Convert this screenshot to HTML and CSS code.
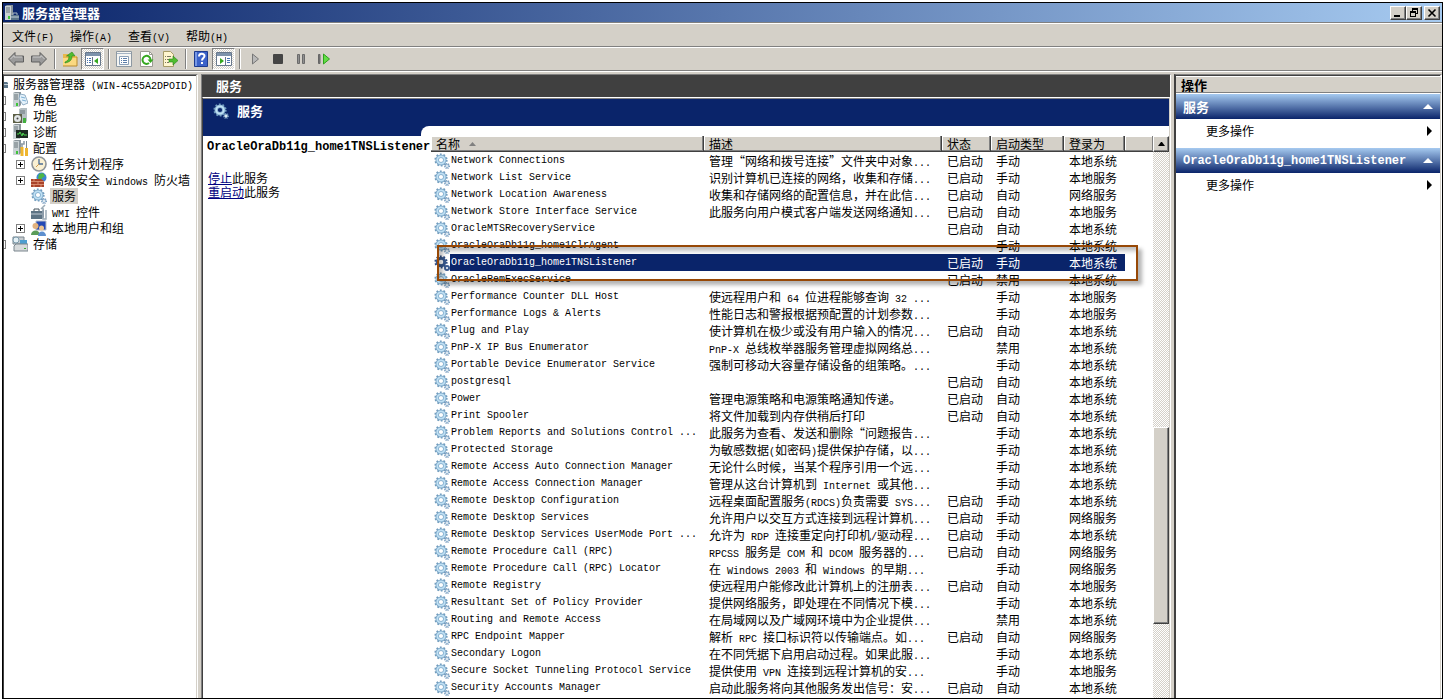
FILE: index.html
```
<!DOCTYPE html>
<html lang="zh-CN">
<head>
<meta charset="utf-8">
<title>服务器管理器</title>
<link rel="stylesheet" href="styles.css">
</head>
<body>
<svg class="defs" aria-hidden="true">
  <symbol id="gear" viewBox="0 0 16 16">
    <circle cx="7" cy="7" r="5.6" fill="none" stroke="#6f9abc" stroke-width="2" stroke-dasharray="1.7 1.82"/>
    <circle cx="7" cy="7" r="3.8" fill="none" stroke="#7fa9c9" stroke-width="3.400"/>
    <circle cx="7" cy="7" r="3.7" fill="none" stroke="#bfe0f4" stroke-width="1.8"/>
    <circle cx="13" cy="13" r="2.3" fill="none" stroke="#7297bb" stroke-width="1.4" stroke-dasharray="1 .8"/>
    <circle cx="13" cy="13" r="1.5" fill="#fff" stroke="#8fb2d0" stroke-width="1"/>
  </symbol>
  <symbol id="gear-dark" viewBox="0 0 16 16">
    <circle cx="7" cy="7" r="5.6" fill="none" stroke="#2c4a80" stroke-width="2" stroke-dasharray="1.7 1.82"/>
    <circle cx="7" cy="7" r="3.8" fill="none" stroke="#38598f" stroke-width="3"/>
    <circle cx="13" cy="13" r="2" fill="none" stroke="#3b5b91" stroke-width="2"/>
  </symbol>
  <symbol id="server" viewBox="0 0 16 16">
    <path d="M1 1l2-1h6v13l-2 2H1z" fill="#8b969c"/>
    <path d="M1 1h6v14H1z" fill="#c9d1d4"/>
    <path d="M2 3h4M2 5h4M2 7h4" stroke="#68747a"/>
    <path d="M4 11h2v3H4z" fill="#3fc43a"/>
  </symbol>
</svg>

<main class="window">
  <header class="titlebar">
    <svg class="i16" viewBox="0 0 16 16"><use href="#server"/><path d="M7 10h8v5H7z" fill="#5a7488"/><path d="M7 12h8" stroke="#c3d0da"/><path d="M9 10V8h4v2" fill="none" stroke="#a9b9c5"/></svg>
    <h1>服务器管理器</h1>
    <button class="wbtn" aria-label="最小化"><svg viewBox="0 0 12 10"><path d="M2 7h6v2H2z"/></svg></button>
    <button class="wbtn" aria-label="还原"><svg viewBox="0 0 12 10"><path d="M4 0h6v6H8V5h1V2H5v1H4zM2 3h6v6H2zm1 2v3h4V5z" fill-rule="evenodd"/></svg></button>
    <button class="wbtn close" aria-label="关闭"><svg viewBox="0 0 12 10"><path d="M2.500 1.500l7 7m0-7l-7 7" stroke="#000" stroke-width="1.600"/></svg></button>
  </header>

  <nav class="menubar">
    <button>文件<span class="lat">(F)</span></button>
    <button>操作<span class="lat">(A)</span></button>
    <button>查看<span class="lat">(V)</span></button>
    <button>帮助<span class="lat">(H)</span></button>
  </nav>

  <div class="toolbar">
    <button aria-label="后退"><svg viewBox="0 0 16 16"><path d="M.5 8L7 1.500V5h8.500v6H7v3.500z" fill="#9a9a9a" stroke="#5f5f5f"/><path d="M2.500 8L6 4.500V6h8" fill="none" stroke="#ccc"/></svg></button>
    <button aria-label="前进"><svg viewBox="0 0 16 16"><path d="M15.500 8L9 1.500V5H.5v6H9v3.500z" fill="#9a9a9a" stroke="#5f5f5f"/><path d="M13.500 8L10 4.500V6H2" fill="none" stroke="#ccc"/></svg></button>
    <i class="sep"></i>
    <button aria-label="上一级"><svg viewBox="0 0 16 16"><path d="M1 3h5l1 2h8v10H1z" fill="#e9b84c"/><path d="M1 7h14v8H1z" fill="#fbd981"/><path d="M1 15h14V6" fill="none" stroke="#b98a2c"/><path d="M3 11c3-1 4-3 4-6H4.500L10 1l3 4h-3c0 4-2 6-7 7z" fill="#50bd30" stroke="#2a841b" stroke-width=".6"/></svg></button>
    <button class="on" aria-label="显示/隐藏控制台树"><svg viewBox="0 0 16 16"><path d="M.5 1.500h15v13H.5z" fill="#fff" stroke="#68788c"/><path d="M1 2h14v3H1z" fill="#7e93ab"/><path d="M7.500 6v8" stroke="#68788c"/><path d="M2 7.500h1m1 0h2M2 9.500h1m1 0h2M2 11.500h1m1 0h2" stroke="#4773b0"/><path d="M9 10l4-3v6z" fill="#36a81f"/></svg></button>
    <i class="sep"></i>
    <button aria-label="属性"><svg viewBox="0 0 16 16"><path d="M.5.5h15v15H.5z" fill="#f5f5f2" stroke="#8d98a2"/><path d="M1 2.500h14" stroke="#a5b4c4"/><path d="M3.500 5.500h9v8h-9z" fill="#fff" stroke="#8ba0b8"/><path d="M5 7.500h1m1 0h4M5 9.500h1m1 0h4M5 11.500h1m1 0h4" stroke="#5b7da8"/></svg></button>
    <button aria-label="刷新"><svg viewBox="0 0 16 16"><path d="M1.500.5h9l3 3v12h-12z" fill="#fff" stroke="#9b9b92"/><path d="M10.500.5v3h3" fill="none" stroke="#9b9b92"/><path d="M10 12a4 4 0 1 1 1.500-3" fill="none" stroke="#36a81f" stroke-width="2"/><path d="M8.500 8.500h6L11.500 12z" fill="#36a81f"/></svg></button>
    <button aria-label="导出列表"><svg viewBox="0 0 16 16"><path d="M1.500.5h7l3 3v12h-10z" fill="#fff6cf" stroke="#a79c68"/><path d="M3 5.500h1m1 0h4M3 8.500h1m1 0h2M3 11.500h1m1 0h2" stroke="#7c7863"/><path d="M7 8h4V5l5 4.500-5 4.500v-3H7z" fill="#50bd30" stroke="#2a841b" stroke-width=".6"/></svg></button>
    <i class="sep"></i>
    <button aria-label="帮助"><svg viewBox="0 0 16 16"><path d="M1.500.5h13v15h-13z" fill="#3b62c9" stroke="#1d3b8e"/><path d="M2 1h2v14H2z" fill="#7797e4"/><path d="M6 5.500C6 2 11.500 2 11.500 5c0 2-2.500 2-2.500 4.500M9 11v2" fill="none" stroke="#fff" stroke-width="2"/></svg></button>
    <button class="on" aria-label="显示/隐藏操作窗格"><svg viewBox="0 0 16 16"><path d="M.5 1.500h15v13H.5z" fill="#fff" stroke="#68788c"/><path d="M1 2h14v3H1z" fill="#7e93ab"/><path d="M9.500 6v8" stroke="#68788c"/><path d="M11 7.500h3M11 9.500h3M11 11.500h3" stroke="#4773b0"/><path d="M8 10L4 7v6z" fill="#36a81f"/></svg></button>
    <i class="sep"></i>
    <button aria-label="启动服务"><svg viewBox="0 0 16 16"><path d="M5.500 3l6 5-6 5z" fill="#b8b8b8" stroke="#777"/></svg></button>
    <button aria-label="停止服务"><svg viewBox="0 0 16 16"><rect x="3" y="3" width="10" height="10" rx="1" fill="#454545"/></svg></button>
    <button aria-label="暂停服务"><svg viewBox="0 0 16 16"><path d="M4.500 3.500h2v9h-2zM9.500 3.500h2v9h-2z" fill="#909090" stroke="#6b6b6b"/></svg></button>
    <button aria-label="重新启动服务"><svg viewBox="0 0 16 16"><path d="M2.500 3.500h1.500v9H2.500z" fill="#777" stroke="#666"/><path d="M7.500 3l6 5-6 5z" fill="#62dc45" stroke="#2da31c"/></svg></button>
  </div>

  <div class="panes">
    <nav class="pane tree">
      <ul>
        <li class="root"><i class="cut"><svg viewBox="0 0 4 8"><path d="M0 2h3l1 1v5H0z" fill="#5a7488"/><path d="M0 4.500h4" stroke="#c3d0da"/></svg></i><span>服务器管理器<span class="lat"> (WIN-4C55A2DPOID)</span></span></li>
        <li class="l1"><i class="edge"></i><svg class="i16" viewBox="0 0 16 16"><use href="#server"/><path d="M8 2l5 1 3 8-5 2-4-6z" fill="#e5f2fb" stroke="#7a9cb8" stroke-width=".8"/><path d="M9 5l4 1m-3 2l4 1" stroke="#5f9dc8" stroke-width=".8"/></svg><span>角色</span></li>
        <li class="l1"><i class="edge"></i><svg class="i16" viewBox="0 0 16 16"><path d="M7 1l2-1h6v13l-2 2H7z" fill="#b4bec2"/><path d="M8 3h5M8 5h5" stroke="#68747a"/><path d="M1 6h9v9H1z" fill="#5c5f46"/><circle cx="5.500" cy="10.500" r="3.500" fill="#e1e5e6"/><circle cx="5.500" cy="10.500" r="1" fill="#444"/><path d="M11 10h3v5h-3z" fill="#42af3d"/></svg><span>功能</span></li>
        <li class="l1"><i class="edge"></i><svg class="i16" viewBox="0 0 16 16"><use href="#server"/><path d="M4 6h12v8H4z" fill="#1d2b22"/><path d="M5 10h2l1-2 2 4 1-3 1 2h3" fill="none" stroke="#4ed451"/></svg><span>诊断</span></li>
        <li class="l1"><i class="edge"></i><svg class="i16" viewBox="0 0 16 16"><use href="#server"/><path d="M10 4v10M8 1v3h4V1" fill="none" stroke="#8c9ba5" stroke-width="1.500"/><path d="M8.500 7h3v9h-3zM13 8h3v8h-3z" fill="#efb52d"/><path d="M14.500 1v7" stroke="#7c8b95"/></svg><span>配置</span></li>
        <li class="l2"><button class="plus" aria-label="展开"></button><svg class="i16" viewBox="0 0 16 16"><circle cx="8" cy="8" r="7" fill="#faf0d2" stroke="#8f9499" stroke-width="1.600"/><path d="M8 3v5h4" fill="none" stroke="#4c6c94" stroke-width="1.300"/><path d="M8 8l-3 3" stroke="#d09a4a"/></svg><span>任务计划程序</span></li>
        <li class="l2"><button class="plus" aria-label="展开"></button><svg class="i16" viewBox="0 0 16 16"><circle cx="10.500" cy="5.500" r="5" fill="#3d83d4"/><path d="M8 2l4-1 2 3-3 2-1 3-3-3z" fill="#4cb648"/><path d="M0 7h10l3 2v6H0z" fill="#a9432a"/><path d="M0 9.500h13M0 12.500h13M3 7v2m4 0v3m-4 0v3m7-3v3" stroke="#e19a7c" stroke-width=".8"/></svg><span>高级安全<span class="lat"> Windows </span>防火墙</span></li>
        <li class="l2"><i class="plus none"></i><svg class="i16"><use href="#gear"/></svg><span class="sel">服务</span></li>
        <li class="l2"><i class="plus none"></i><svg class="i16" viewBox="0 0 16 16"><path d="M0 7h11l2-2v8l-2 2H0z" fill="#5d7384"/><path d="M0 10h11" stroke="#c2ccd4"/><path d="M3 7V5h5v2" fill="none" stroke="#44525d"/><path d="M10 5l4-4M12 4v11h3V6" fill="none" stroke="#9cabb6" stroke-width="1.500"/></svg><span><span class="lat">WMI </span>控件</span></li>
        <li class="l2"><button class="plus" aria-label="展开"></button><svg class="i16" viewBox="0 0 16 16"><path d="M5 1h10v9H5z" fill="#2449b5" stroke="#b6bdc8"/><circle cx="4.500" cy="6" r="3" fill="#e2b27e"/><path d="M0 15c0-6 9-6 9 0z" fill="#5a9c58"/><circle cx="10.500" cy="8" r="2.500" fill="#edc592"/><path d="M7 16c0-6 8-6 8 0z" fill="#5d8fce"/></svg><span>本地用户和组</span></li>
        <li class="l1"><i class="edge"></i><svg class="i16" viewBox="0 0 16 16"><path d="M1 1h11v7H1z" fill="#c6ccd0" stroke="#7b868e"/><circle cx="4" cy="4" r="3" fill="#e4f0f5" stroke="#7b9aab"/><path d="M8 4h7v5H8z" fill="#4d9ed0"/><path d="M2 10l2-2h12v7H2z" fill="#d7dadb" stroke="#7b868e"/><path d="M12 12h2v1h-2z" fill="#39b035"/></svg><span>存储</span></li>
      </ul>
    </nav>

    <section class="pane center">
      <h2 class="dark">服务</h2>
      <div class="view">
        <div class="detail">
          <div class="banner"><svg class="i16"><use href="#gear"/></svg><h3>服务</h3></div>
          <div class="info">
            <strong>OracleOraDb11g_home1TNSListener</strong>
            <p><a href="#">停止</a>此服务</p>
            <p><a href="#">重启动</a>此服务</p>
          </div>
        </div>
        <div class="tabwrap">
          <div class="tab">
            <div class="list">
              <table>
                <colgroup><col class="c1"><col class="c2"><col class="c3"><col class="c4"><col class="c5"><col></colgroup>
                <thead><tr><th>名称<svg class="sort" viewBox="0 0 7 4"><path d="M3.500 0L7 4H0z" fill="#808080"/></svg></th><th>描述</th><th>状态</th><th>启动类型</th><th>登录为</th><th></th></tr></thead>
                <tbody>
<tr><td><svg class="i16"><use href="#gear"/></svg><span>Network Connections</span></td><td>管理“网络和拨号连接”文件夹中对象<span class="lat">...</span></td><td>已启动</td><td>手动</td><td>本地系统</td><td></td></tr>
<tr><td><svg class="i16"><use href="#gear"/></svg><span>Network List Service</span></td><td>识别计算机已连接的网络，收集和存储<span class="lat">...</span></td><td>已启动</td><td>手动</td><td>本地服务</td><td></td></tr>
<tr><td><svg class="i16"><use href="#gear"/></svg><span>Network Location Awareness</span></td><td>收集和存储网络的配置信息，并在此信<span class="lat">...</span></td><td>已启动</td><td>自动</td><td>网络服务</td><td></td></tr>
<tr><td><svg class="i16"><use href="#gear"/></svg><span>Network Store Interface Service</span></td><td>此服务向用户模式客户端发送网络通知<span class="lat">...</span></td><td>已启动</td><td>自动</td><td>本地服务</td><td></td></tr>
<tr><td><svg class="i16"><use href="#gear"/></svg><span>OracleMTSRecoveryService</span></td><td></td><td>已启动</td><td>自动</td><td>本地系统</td><td></td></tr>
<tr><td><svg class="i16"><use href="#gear"/></svg><span>OracleOraDb11g_home1ClrAgent</span></td><td></td><td></td><td>手动</td><td>本地系统</td><td></td></tr>
<tr class="selected"><td><svg class="i16"><use href="#gear-dark"/></svg><span>OracleOraDb11g_home1TNSListener</span></td><td></td><td>已启动</td><td>手动</td><td>本地系统</td><td></td></tr>
<tr><td><svg class="i16"><use href="#gear"/></svg><span>OracleRemExecService</span></td><td></td><td>已启动</td><td>禁用</td><td>本地系统</td><td></td></tr>
<tr><td><svg class="i16"><use href="#gear"/></svg><span>Performance Counter DLL Host</span></td><td>使远程用户和<span class="lat"> 64 </span>位进程能够查询<span class="lat"> 32 ...</span></td><td></td><td>手动</td><td>本地服务</td><td></td></tr>
<tr><td><svg class="i16"><use href="#gear"/></svg><span>Performance Logs &amp; Alerts</span></td><td>性能日志和警报根据预配置的计划参数<span class="lat">...</span></td><td></td><td>手动</td><td>本地服务</td><td></td></tr>
<tr><td><svg class="i16"><use href="#gear"/></svg><span>Plug and Play</span></td><td>使计算机在极少或没有用户输入的情况<span class="lat">...</span></td><td>已启动</td><td>自动</td><td>本地系统</td><td></td></tr>
<tr><td><svg class="i16"><use href="#gear"/></svg><span>PnP-X IP Bus Enumerator</span></td><td><span class="lat">PnP-X </span>总线枚举器服务管理虚拟网络总<span class="lat">...</span></td><td></td><td>禁用</td><td>本地系统</td><td></td></tr>
<tr><td><svg class="i16"><use href="#gear"/></svg><span>Portable Device Enumerator Service</span></td><td>强制可移动大容量存储设备的组策略。<span class="lat">...</span></td><td></td><td>手动</td><td>本地系统</td><td></td></tr>
<tr><td><svg class="i16"><use href="#gear"/></svg><span>postgresql</span></td><td></td><td>已启动</td><td>自动</td><td>本地系统</td><td></td></tr>
<tr><td><svg class="i16"><use href="#gear"/></svg><span>Power</span></td><td>管理电源策略和电源策略通知传递。</td><td>已启动</td><td>自动</td><td>本地系统</td><td></td></tr>
<tr><td><svg class="i16"><use href="#gear"/></svg><span>Print Spooler</span></td><td>将文件加载到内存供稍后打印</td><td>已启动</td><td>自动</td><td>本地系统</td><td></td></tr>
<tr><td><svg class="i16"><use href="#gear"/></svg><span>Problem Reports and Solutions Control ...</span></td><td>此服务为查看、发送和删除“问题报告<span class="lat">...</span></td><td></td><td>手动</td><td>本地系统</td><td></td></tr>
<tr><td><svg class="i16"><use href="#gear"/></svg><span>Protected Storage</span></td><td>为敏感数据<span class="lat">(</span>如密码<span class="lat">)</span>提供保护存储，以<span class="lat">...</span></td><td></td><td>手动</td><td>本地系统</td><td></td></tr>
<tr><td><svg class="i16"><use href="#gear"/></svg><span>Remote Access Auto Connection Manager</span></td><td>无论什么时候，当某个程序引用一个远<span class="lat">...</span></td><td></td><td>手动</td><td>本地系统</td><td></td></tr>
<tr><td><svg class="i16"><use href="#gear"/></svg><span>Remote Access Connection Manager</span></td><td>管理从这台计算机到<span class="lat"> Internet </span>或其他<span class="lat">...</span></td><td></td><td>手动</td><td>本地系统</td><td></td></tr>
<tr><td><svg class="i16"><use href="#gear"/></svg><span>Remote Desktop Configuration</span></td><td>远程桌面配置服务<span class="lat">(RDCS)</span>负责需要<span class="lat"> SYS...</span></td><td>已启动</td><td>手动</td><td>本地系统</td><td></td></tr>
<tr><td><svg class="i16"><use href="#gear"/></svg><span>Remote Desktop Services</span></td><td>允许用户以交互方式连接到远程计算机<span class="lat">...</span></td><td>已启动</td><td>手动</td><td>网络服务</td><td></td></tr>
<tr><td><svg class="i16"><use href="#gear"/></svg><span>Remote Desktop Services UserMode Port ...</span></td><td>允许为<span class="lat"> RDP </span>连接重定向打印机<span class="lat">/</span>驱动程<span class="lat">...</span></td><td>已启动</td><td>手动</td><td>本地系统</td><td></td></tr>
<tr><td><svg class="i16"><use href="#gear"/></svg><span>Remote Procedure Call (RPC)</span></td><td><span class="lat">RPCSS </span>服务是<span class="lat"> COM </span>和<span class="lat"> DCOM </span>服务器的<span class="lat">...</span></td><td>已启动</td><td>自动</td><td>网络服务</td><td></td></tr>
<tr><td><svg class="i16"><use href="#gear"/></svg><span>Remote Procedure Call (RPC) Locator</span></td><td>在<span class="lat"> Windows 2003 </span>和<span class="lat"> Windows </span>的早期<span class="lat">...</span></td><td></td><td>手动</td><td>网络服务</td><td></td></tr>
<tr><td><svg class="i16"><use href="#gear"/></svg><span>Remote Registry</span></td><td>使远程用户能修改此计算机上的注册表<span class="lat">...</span></td><td>已启动</td><td>自动</td><td>本地服务</td><td></td></tr>
<tr><td><svg class="i16"><use href="#gear"/></svg><span>Resultant Set of Policy Provider</span></td><td>提供网络服务，即处理在不同情况下模<span class="lat">...</span></td><td></td><td>手动</td><td>本地系统</td><td></td></tr>
<tr><td><svg class="i16"><use href="#gear"/></svg><span>Routing and Remote Access</span></td><td>在局域网以及广域网环境中为企业提供<span class="lat">...</span></td><td></td><td>禁用</td><td>本地系统</td><td></td></tr>
<tr><td><svg class="i16"><use href="#gear"/></svg><span>RPC Endpoint Mapper</span></td><td>解析<span class="lat"> RPC </span>接口标识符以传输端点。如<span class="lat">...</span></td><td>已启动</td><td>自动</td><td>网络服务</td><td></td></tr>
<tr><td><svg class="i16"><use href="#gear"/></svg><span>Secondary Logon</span></td><td>在不同凭据下启用启动过程。如果此服<span class="lat">...</span></td><td></td><td>手动</td><td>本地系统</td><td></td></tr>
<tr><td><svg class="i16"><use href="#gear"/></svg><span>Secure Socket Tunneling Protocol Service</span></td><td>提供使用<span class="lat"> VPN </span>连接到远程计算机的安<span class="lat">...</span></td><td></td><td>手动</td><td>本地服务</td><td></td></tr>
<tr><td><svg class="i16"><use href="#gear"/></svg><span>Security Accounts Manager</span></td><td>启动此服务将向其他服务发出信号：安<span class="lat">...</span></td><td>已启动</td><td>自动</td><td>本地系统</td><td></td></tr>
                </tbody>
              </table>
              <div class="mark"></div>
            </div>
            <div class="scroll">
              <button class="up" aria-label="向上滚动"><svg viewBox="0 0 7 4"><path d="M3 0h1l3 4H0z"/></svg></button>
              <div class="track"><i class="before"></i><i class="thumb"></i><i class="after"></i></div>
            </div>
          </div>
        </div>
      </div>
    </section>

    <aside class="pane actions">
      <h2>操作</h2>
      <button class="group"><span>服务</span><svg viewBox="0 0 10 5"><path d="M5 0l5 5H0z" fill="#fff"/></svg></button>
      <button class="more"><span>更多操作</span><svg viewBox="0 0 5 10"><path d="M0 0l5 5-5 5z"/></svg></button>
      <button class="group"><span class="latb">OracleOraDb11g_home1TNSListener</span><svg viewBox="0 0 10 5"><path d="M5 0l5 5H0z" fill="#fff"/></svg></button>
      <button class="more"><span>更多操作</span><svg viewBox="0 0 5 10"><path d="M0 0l5 5-5 5z"/></svg></button>
    </aside>
  </div>
</main>
</body>
</html>
```
FILE: styles.css
```
* { box-sizing: border-box; margin: 0; padding: 0; }

body {
  height: 100vh;
  padding: 2px 2px 1px;
  background: #fff;
  color: #000;
  font: 12px/16px "Noto Sans CJK SC", sans-serif;
  overflow: hidden;
}

button { font: inherit; color: inherit; border: 0; background: none; }
ul { list-style: none; }
svg { display: block; flex: none; }
.defs { position: absolute; width: 0; height: 0; }
.i16 { width: 16px; height: 16px; }
.lat { font-family: "Liberation Mono", monospace; font-size: 10px; line-height: 0; white-space: pre; }

.window {
  display: flex;
  flex-direction: column;
  height: 100%;
  border: 1px solid #000;
  background: #d4d0c8;
}

/* title bar */
.titlebar {
  display: flex;
  align-items: center;
  height: 19px;
  flex: none;
  padding: 0 2px 0 1px;
  background: linear-gradient(to right, #0a246a, #a6caf0);
  color: #fff;
}
.titlebar h1 { flex: 1; padding-left: 2px; font-size: 13px; line-height: 18px; }
.wbtn, .up, .thumb {
  background: #d4d0c8;
  border: 1px solid;
  border-color: #fff #404040 #404040 #fff;
  box-shadow: inset -1px -1px #808080;
}
.wbtn { width: 16px; height: 14px; padding: 1px; }
.wbtn.close { margin-left: 2px; }
.wbtn svg { width: 12px; height: 10px; }

/* menu and tool bars */
.menubar, .toolbar {
  display: flex;
  flex: none;
  height: 24px;
  border-top: 1px solid #808080;
  box-shadow: inset 0 1px #fff;
}
.menubar { gap: 16px; padding: 2px 9px 0; }
.toolbar { align-items: center; padding: 1px 1px 0; }
.toolbar button {
  display: flex;
  align-items: center;
  justify-content: center;
  width: 23px;
  height: 22px;
}
.toolbar svg { width: 16px; height: 16px; }
.toolbar .on {
  border: 1px solid;
  border-color: #808080 #fff #fff #808080;
  background: repeating-conic-gradient(#fff 0 25%, #d4d0c8 0 50%) 0 0 / 2px 2px;
}
.sep { width: 8px; height: 20px; border-left: 4px solid transparent; background: linear-gradient(to right, #808080 1px, #fff 1px 2px, transparent 2px) content-box; }

/* three panes */
.panes {
  display: grid;
  grid-template-columns: 195px 1fr 268px;
  gap: 3px;
  flex: 1;
  min-height: 0;
  padding-top: 3px;
  border-top: 1px solid #808080;
  box-shadow: inset 0 1px #fff;
}
.pane { min-width: 0; min-height: 0; overflow: hidden; border-top: 1px solid #808080; background: #fff; }

/* tree */
.tree { padding-top: 1px; border-left: 1px solid #404040; border-right: 1px solid #fff; box-shadow: inset -1px 0 #d4d0c8, inset 0 1px #404040; }
.tree li { display: flex; align-items: center; height: 16px; white-space: nowrap; }
.tree .cut { width: 9px; }
.cut svg { width: 4px; height: 8px; }
.edge { width: 2px; height: 9px; margin-right: 6px; border: 1px solid #808080; border-left: 0; }
.l1 > span { padding-left: 5px; }
.l2 { padding-left: 12px; }
.l2 > span { margin-left: 3px; padding: 0 2px; }
.plus {
  width: 9px;
  height: 9px;
  margin-right: 6px;
  border: 1px solid #808080;
  background: linear-gradient(#000, #000) center / 5px 1px no-repeat, linear-gradient(#000, #000) center / 1px 5px no-repeat;
}
.plus.none { visibility: hidden; }
.sel { background: #d4d0c8; }

/* services view */
.center { display: flex; flex-direction: column; border-left: 1px solid #808080; border-right: 1px solid #fff; }
.dark {
  flex: none;
  height: 22px;
  padding-left: 14px;
  background: #404040;
  color: #fff;
  font-size: 13px;
  line-height: 22px;
}
.view {
  display: flex;
  flex: 1;
  min-height: 0;
  border-top: 1px solid #fff;
  border-left: 1px solid #404040;
  border-right: 1px solid #d4d0c8;
  box-shadow: inset 0 1px #808080;
}
.detail { position: relative; z-index: 1; width: 218px; flex: none; padding-top: 1px; }
.banner { display: flex; gap: 8px; height: 37px; padding: 4px 10px; background: #0a246a; color: #fff; }
.banner h3 { font-size: 13px; line-height: 16px; }
.info { padding: 3px 4px; line-height: 14px; }
.info strong { display: block; height: 32px; font: bold 12px/16px "Liberation Mono", monospace; }
.info p { padding-left: 1px; }
.info a { color: #000080; }
.tabwrap { display: flex; flex: 1; min-width: 0; margin-top: 1px; padding-top: 27px; background: #0a246a; }
.tab { display: flex; flex: 1; min-width: 0; padding: 10px 0 0 10px; border-radius: 8px 0 0 0; background: #fff; }
.list { position: relative; flex: 1; min-width: 0; overflow: hidden; }

table { width: 100%; table-layout: fixed; border-collapse: separate; border-spacing: 0; }
.c1 { width: 273px; }
.c2 { width: 238px; }
.c3 { width: 49px; }
.c4 { width: 73px; }
.c5 { width: 61px; }
th {
  height: 16px;
  padding-left: 5px;
  background: #d4d0c8;
  border-right: 1px solid #404040;
  border-bottom: 1px solid #404040;
  box-shadow: inset -1px -1px #808080, inset 1px 1px #fff;
  font-weight: normal;
  line-height: 15px;
  text-align: left;
  white-space: nowrap;
}
th:last-child { border-right: 0; }
.sort { display: inline-block; width: 7px; height: 4px; margin-left: 9px; vertical-align: 3px; }
td { height: 17px; padding-left: 5px; line-height: 17px; white-space: nowrap; overflow: hidden; vertical-align: top; }
td:first-child { display: flex; align-items: center; padding-left: 3px; font: 10px/17px "Liberation Mono", monospace; }
td:first-child span { flex: 1; padding-left: 1px; white-space: pre; }
.selected td { background: #0a246a; color: #fff; }
.selected td:first-child { background: none; }
.selected td:first-child span { background: #0a246a; }
.selected td:last-child { background: none; }

.mark {
  position: absolute;
  top: 109px;
  left: 6px;
  right: 15px;
  height: 36px;
  border: 2px solid #974806;
  box-shadow: 4px 4px 4px rgba(0, 0, 0, .3), inset 4px 4px 4px rgba(0, 0, 0, .25);
}

.scroll { display: flex; flex-direction: column; width: 16px; flex: none; }
.up { display: flex; align-items: center; justify-content: center; height: 16px; flex: none; }
.up svg { width: 7px; height: 4px; }
.track {
  display: flex;
  flex-direction: column;
  flex: 1;
  background: repeating-conic-gradient(#fff 0 25%, #d4d0c8 0 50%) 0 0 / 2px 2px;
}
.before { flex: 276; }
.thumb { flex: 196; }
.after { flex: 74; }

/* actions pane */
.actions {
  display: flex;
  flex-direction: column;
  padding-top: 1px;
  border-left: 2px solid #404040;
  border-right: 1px solid #fff;
  box-shadow: inset -1px 0 #d4d0c8, inset 0 1px #404040;
}
.actions h2 {
  height: 17px;
  margin-bottom: 1px;
  padding-left: 5px;
  border-top: 1px solid #fff;
  border-bottom: 1px solid #808080;
  background: #d4d0c8;
  font-size: 13px;
  line-height: 15px;
}
.group, .more { display: flex; align-items: center; justify-content: space-between; margin-right: 1px; text-align: left; }
.group { height: 25px; padding: 0 7px; background: linear-gradient(#a6caf0, #0a246a); color: #fff; font-size: 13px; font-weight: bold; }
.group svg { width: 10px; height: 5px; }
.latb { font: bold 12px/16px "Liberation Mono", monospace; }
.more { height: 24px; margin-bottom: 5px; padding: 0 8px 0 30px; }
.more svg { width: 5px; height: 10px; }
```
